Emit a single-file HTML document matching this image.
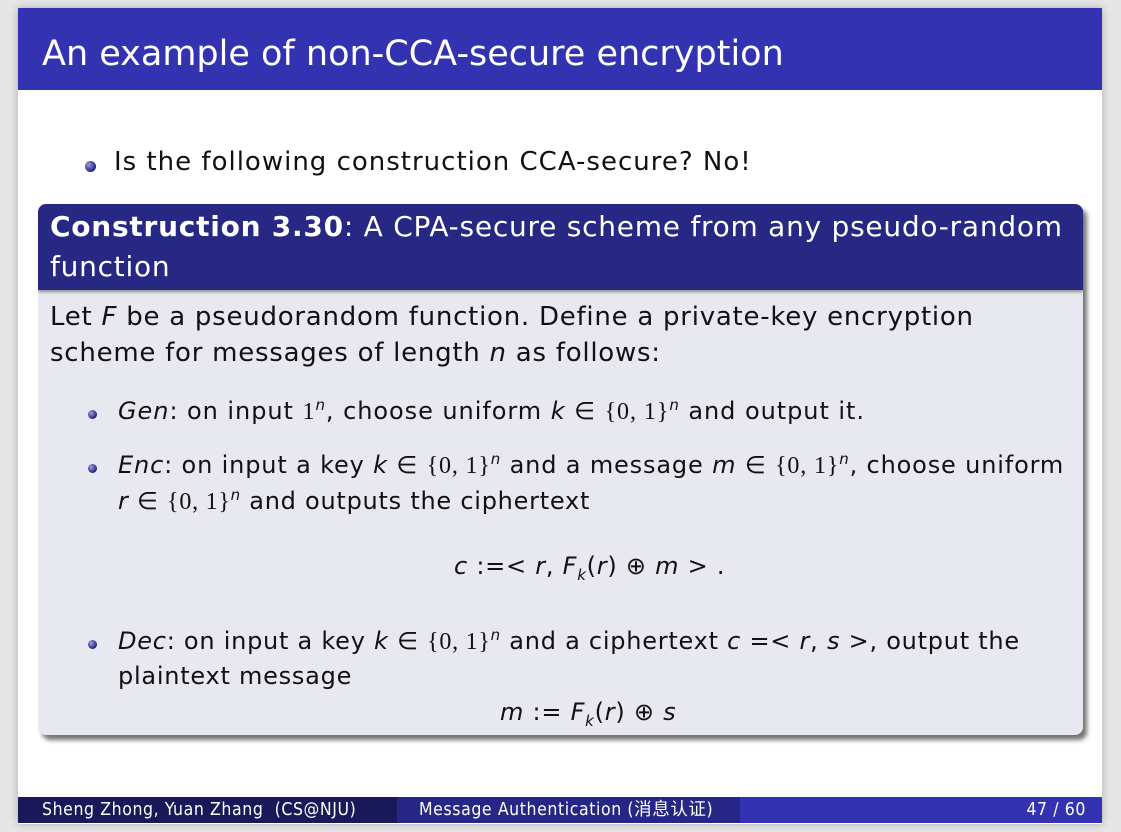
<!DOCTYPE html>
<html><head><meta charset="utf-8"><style>
body{margin:0;width:1121px;height:832px;background:#e6e6e6;font-family:"DejaVu Sans","Liberation Sans",sans-serif;overflow:hidden;position:relative}
.page{position:absolute;left:18px;top:8px;width:1084px;height:816px;background:#fff;box-shadow:0 0 8px rgba(0,0,0,.25)}
.hdr{position:absolute;left:0;top:0;width:1084px;height:82px;background:#3333b2;color:#fff;font-size:35px;line-height:82px}
.hdr span{position:absolute;left:24px;top:5px;letter-spacing:0px}
.t{position:absolute;white-space:nowrap;font-size:26px;color:#111}
.box .t{letter-spacing:0.75px}
.bul{position:absolute;width:11px;height:11px;border-radius:50%;background:radial-gradient(circle at 35% 35%,#9a9ae0,#22227a 70%)}
.box{position:absolute;left:20px;top:196px;width:1045px;height:531px;border-radius:8px;background:#e8e8f0;box-shadow:4px 5px 5px rgba(0,0,0,.55);overflow:hidden}
.bh{position:absolute;left:0;top:0;width:100%;height:86px;background:#272784;box-shadow:0 2px 3px rgba(0,0,0,.4)}
i{font-style:italic}
.m{font-family:"Liberation Serif",serif;font-style:normal}
.ft{position:absolute;top:789px;height:26px;color:#fff;font-size:17.5px;line-height:26px;letter-spacing:0.6px;font-family:"DejaVu Sans Condensed","DejaVu Sans","Noto Sans CJK SC",sans-serif}
</style></head><body>
<div class="page">
<div class="hdr"><span>An example of non-CCA-secure encryption</span></div>
<div class="bul" style="left:67px;top:153px"></div>
<div class="t" style="left:96px;top:139px;letter-spacing:1px">Is the following construction CCA-secure? No!</div>
<div class="box"><div class="bh"></div>
<div class="t" style="left:12px;top:6px;color:#fff;font-size:28px"><b>Construction 3.30</b>: A CPA-secure scheme from any pseudo-random</div>
<div class="t" style="left:12px;top:46px;color:#fff;font-size:28px">function</div>
<div class="t" style="left:12px;top:98px">Let <i>F</i> be a pseudorandom function. Define a private-key encryption</div>
<div class="t" style="left:12px;top:134px">scheme for messages of length <i>n</i> as follows:</div>
<div class="bul" style="left:50px;top:206px;width:9px;height:9px"></div>
<div class="t" style="left:80px;top:192px;font-size:24px;letter-spacing:0.95px"><i>Gen</i>: on input <span class="m">1</span><sup style="font-size:15px"><i>n</i></sup>, choose uniform <i>k</i> ∈ <span class="m">{0, 1}</span><sup style="font-size:15px"><i>n</i></sup> and output it.</div>
<div class="bul" style="left:50px;top:260px;width:9px;height:9px"></div>
<div class="t" style="left:80px;top:246px;font-size:24px;letter-spacing:0.85px"><i>Enc</i>: on input a key <i>k</i> ∈ <span class="m">{0, 1}</span><sup style="font-size:15px"><i>n</i></sup> and a message <i>m</i> ∈ <span class="m">{0, 1}</span><sup style="font-size:15px"><i>n</i></sup>, choose uniform</div>
<div class="t" style="left:80px;top:282px;font-size:24px"><i>r</i> ∈ <span class="m">{0, 1}</span><sup style="font-size:15px"><i>n</i></sup> and outputs the ciphertext</div>
<div class="t" style="left:416px;top:348px;font-size:24px"><i>c</i> :=&lt; <i>r</i>, <i>F<sub style="font-size:15px">k</sub></i>(<i>r</i>) ⊕ <i>m</i> &gt; .</div>
<div class="bul" style="left:50px;top:436px;width:9px;height:9px"></div>
<div class="t" style="left:80px;top:422px;font-size:24px"><i>Dec</i>: on input a key <i>k</i> ∈ <span class="m">{0, 1}</span><sup style="font-size:15px"><i>n</i></sup> and a ciphertext <i>c</i> =&lt; <i>r</i>, <i>s</i> &gt;, output the</div>
<div class="t" style="left:80px;top:458px;font-size:24px">plaintext message</div>
<div class="t" style="left:462px;top:494px;font-size:24px"><i>m</i> := <i>F<sub style="font-size:15px">k</sub></i>(<i>r</i>) ⊕ <i>s</i></div>
</div>
<div class="ft" style="left:0;width:379px;background:#191959"><span style="margin-left:24px">Sheng Zhong, Yuan Zhang&nbsp; (CS@NJU)</span></div>
<div class="ft" style="left:379px;width:343px;background:#262686"><span style="margin-left:22px">Message Authentication (消息认证)</span></div>
<div class="ft" style="left:722px;width:362px;background:#3333b2;text-align:right"><span style="margin-right:16px">47 / 60</span></div>
</div>
</body></html>
